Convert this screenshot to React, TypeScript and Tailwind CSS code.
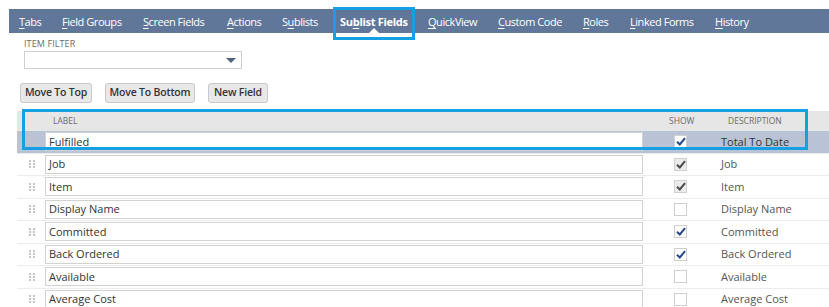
import React from "react";

const tabs: { pre: string; u: string; post: string; w: number; active?: boolean }[] = [
  { pre: "", u: "T", post: "abs", w: 43 },
  { pre: "", u: "F", post: "ield Groups", w: 81 },
  { pre: "", u: "S", post: "creen Fields", w: 84 },
  { pre: "", u: "A", post: "ctions", w: 55 },
  { pre: "S", u: "u", post: "blists", w: 58 },
  { pre: "Su", u: "b", post: "list Fields", w: 88, active: true },
  { pre: "", u: "Q", post: "uickView", w: 70 },
  { pre: "", u: "C", post: "ustom Code", w: 85 },
  { pre: "", u: "R", post: "oles", w: 47 },
  { pre: "", u: "L", post: "inked Forms", w: 85 },
  { pre: "", u: "H", post: "istory", w: 80 },
];

type Row = { label: string; show: "on" | "off" | "locked"; desc: string; selected?: boolean };
const rows: Row[] = [
  { label: "Fulfilled", show: "on", desc: "Total To Date", selected: true },
  { label: "Job", show: "locked", desc: "Job" },
  { label: "Item", show: "locked", desc: "Item" },
  { label: "Display Name", show: "off", desc: "Display Name" },
  { label: "Committed", show: "on", desc: "Committed" },
  { label: "Back Ordered", show: "on", desc: "Back Ordered" },
  { label: "Available", show: "off", desc: "Available" },
  { label: "Average Cost", show: "off", desc: "Average Cost" },
];

const buttons = [
  { label: "Move To Top", w: 72 },
  { label: "Move To Bottom", w: 90 },
  { label: "New Field", w: 60 },
];

function Handle() {
  return (
    <svg width="6" height="8" viewBox="0 0 6 8" className="block">
      {[0, 3, 6].map((y) =>
        [0, 4].map((x) => <rect key={`${x}-${y}`} x={x} y={y} width="2" height="2" fill="#c4c4c4" />)
      )}
    </svg>
  );
}

function Check({ state }: { state: Row["show"] }) {
  const locked = state === "locked";
  return (
    <div
      className={`w-[13px] h-[13px] border flex items-center justify-center ${
        locked ? "bg-[#ebebeb] border-[#d0d0d0]" : "bg-white border-[#cfcfcf]"
      }`}
    >
      {state !== "off" && (
        <svg width="10" height="9" viewBox="0 0 10 9">
          <path
            d="M1 4.8 L3.8 7.5 L9 1.2"
            fill="none"
            stroke={locked ? "#4a4a4a" : "#24498a"}
            strokeWidth="2"
          />
        </svg>
      )}
    </div>
  );
}

export default function App() {
  return (
    <div
      className="relative w-[829px] h-[307px] overflow-hidden bg-white text-[#333]"
      style={{ fontFamily: '"Open Sans", "Noto Sans", sans-serif' }}
    >
      {/* nav */}
      <div className="mt-[9px] ml-[9px] h-[24px] bg-[#607799] flex items-center pl-[10px] relative">
        {tabs.map((t) => (
          <div
            key={t.u + t.post}
            className={`shrink-0 text-[11px] leading-none text-white whitespace-nowrap ${
              t.active ? "font-bold tracking-[-0.3px]" : "tracking-[-0.45px]"
            }`}
            style={{ width: t.w }}
          >
            {t.pre}
            <span className="underline underline-offset-2">{t.u}</span>
            {t.post}
          </div>
        ))}
        <div className="absolute left-[360px] bottom-0 w-0 h-0 border-l-[5px] border-r-[5px] border-b-[5px] border-l-transparent border-r-transparent border-b-white" />
      </div>

      {/* item filter */}
      <div className="ml-[24px] mt-[6px] text-[9px] leading-[10px] text-[#6b6b6b] uppercase tracking-[0.1px]">
        Item Filter
      </div>
      <div className="ml-[24px] mt-[2px] w-[218px] h-[18px] border border-[#cfcfcf] bg-white flex items-center justify-end pr-[5px]">
        <div className="w-0 h-0 border-l-[5px] border-r-[5px] border-t-[5px] border-l-transparent border-r-transparent border-t-[#4e6284]" />
      </div>

      {/* buttons */}
      <div className="mt-[14px] ml-[20px] flex gap-[13px]">
        {buttons.map((b) => (
          <div
            key={b.label}
            className="h-[20px] flex items-center justify-center rounded-[3px] border border-[#c9c9c9] bg-[#e8e8e8] text-[10.5px] tracking-[-0.2px] font-semibold text-[#333] whitespace-nowrap"
            style={{ width: b.w }}
          >
            {b.label}
          </div>
        ))}
      </div>

      {/* table */}
      <div className="mt-[8px] ml-[17px]">
        <div className="h-[20px] bg-[#e6e6e6] flex items-center text-[8.5px] text-[#6b6b6b] uppercase">
          <div className="w-[36px]" />
          <div className="w-[616px]">Label</div>
          <div className="w-[59px]">Show</div>
          <div>Description</div>
        </div>
        {rows.map((r) => (
          <div
            key={r.label}
            className={`h-[22.5px] flex items-center border-b border-[#ececec] ${r.selected ? "bg-[#b9c3d5]" : "bg-white"}`}
          >
            <div className="w-[28px] flex justify-center pl-[2px]">
              <Handle />
            </div>
            <div className="w-[626px]">
              <div className="w-[598px] h-[19px] border border-[#d2d2d2] bg-white flex items-center pl-[3px] text-[11px] text-[#333]">
                {r.label}
              </div>
            </div>
            <div className="w-[50px] pl-[3px]">
              <Check state={r.show} />
            </div>
            <div className={`text-[11px] ${r.selected ? "text-[#333]" : "text-[#555]"}`}>{r.desc}</div>
          </div>
        ))}
      </div>

      {/* highlight boxes */}
      <div className="absolute left-[333px] top-[7px] w-[82px] h-[33px] border-[3px] border-[#14a0e2]" />
      <div className="absolute left-[22px] top-[109px] w-[786px] h-[41px] border-[3px] border-[#14a0e2]" />
    </div>
  );
}
